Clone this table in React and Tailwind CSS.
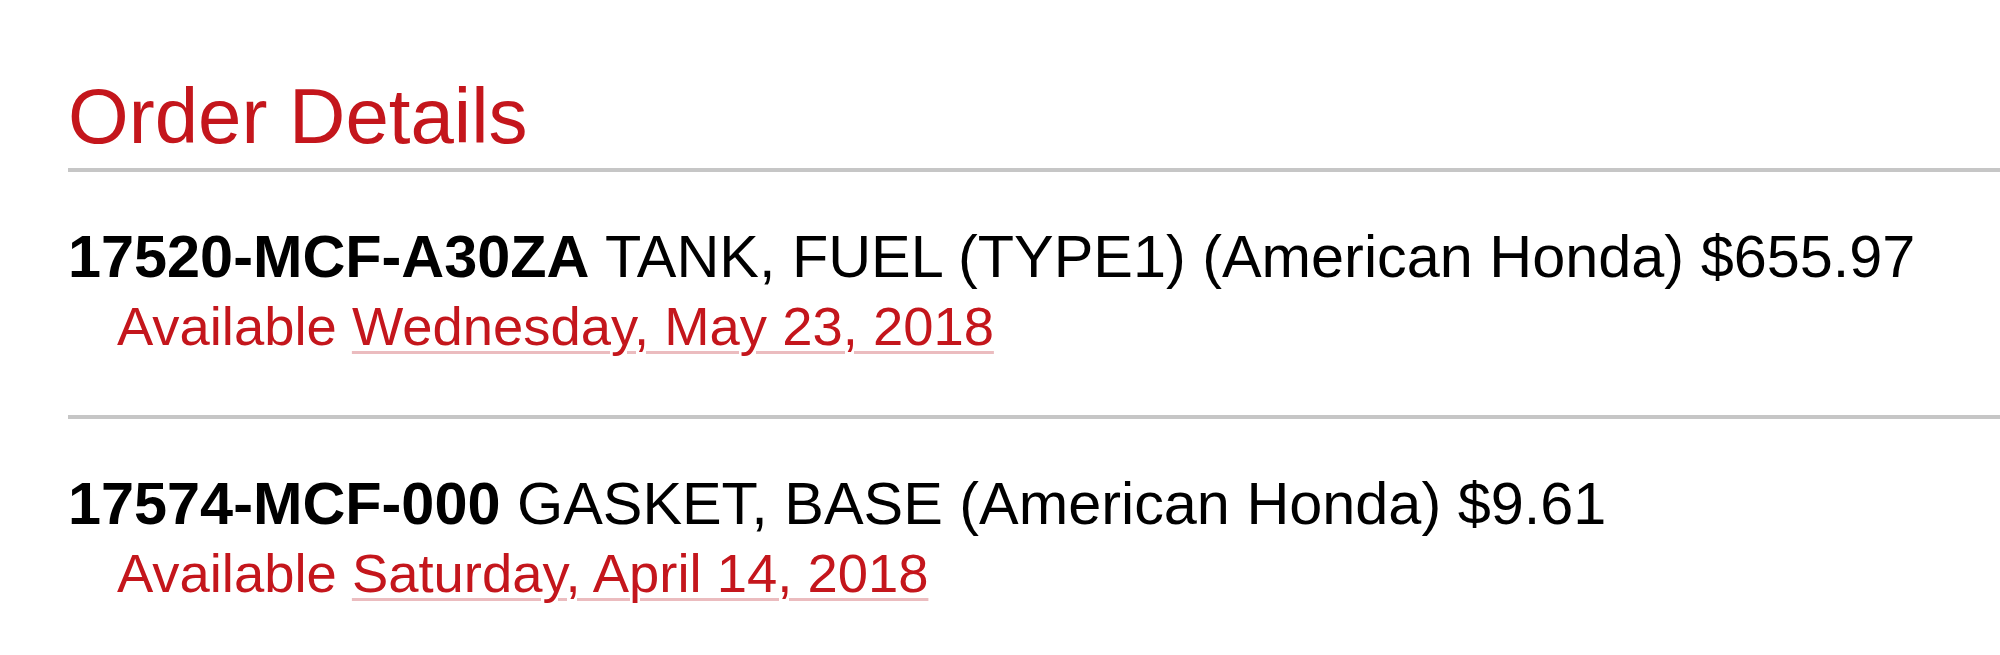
const items = [
  {
    part: '17520-MCF-A30ZA',
    name: 'TANK, FUEL (TYPE1)',
    brand: 'American Honda',
    price: '$655.97',
    date: 'Wednesday, May 23, 2018',
  },
  {
    part: '17574-MCF-000',
    name: 'GASKET, BASE',
    brand: 'American Honda',
    price: '$9.61',
    date: 'Saturday, April 14, 2018',
  },
];

const OrderItem = ({ item }) => (
  <div className="pt-[51px] pb-[56px] border-b-4 border-[#c6c6c6]">
    <p className="text-[59.4px] leading-[68px] text-black whitespace-nowrap">
      <span className="font-bold">{item.part}</span> {item.name} ({item.brand}) {item.price}
    </p>
    <p className="mt-[4px] pl-[49px] text-[54.4px] leading-[64px] text-[#c4161c] whitespace-nowrap">
      Available{' '}
      <a
        href="#"
        className="underline decoration-[#ebbcbf] decoration-[3px] underline-offset-[6px]"
      >
        {item.date}
      </a>
    </p>
  </div>
);

export default function App() {
  return (
    <div className="min-h-screen bg-white font-['Liberation_Sans',Arial,sans-serif]">
      <div className="ml-[68px] pt-[71px]">
        <h1 className="text-[78px] leading-[90px] text-[#c4161c] pb-[7px] border-b-4 border-[#c6c6c6]">
          Order Details
        </h1>
        {items.map((item) => (
          <OrderItem key={item.part} item={item} />
        ))}
      </div>
    </div>
  );
}
